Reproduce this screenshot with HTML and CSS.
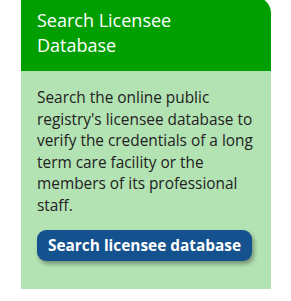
FILE: index.html
```html
<!DOCTYPE html>
<html lang="en">
<head>
  <meta charset="UTF-8" />
  <meta name="viewport" content="width=device-width, initial-scale=1.0"/>
  <title>Search Licensee Database</title>
  <link rel="stylesheet" href="styles.css">
</head>
<body>
  <div class="info-card">
    <div class="card-header">
      <h2>Search Licensee Database</h2>
    </div>
    <div class="card-body">
      <p>Search the online public registry's licensee database to verify the credentials of a long term care facility or the members of its professional staff.</p>
      <a class="btn-search" href="#">Search licensee database</a>
    </div>
  </div>
</body>
</html>
```

FILE: styles.css
```css
:root {
  --header-green: #009f00;
  --body-green: #b3e2b3;
  --btn-blue: #13518f;
  --text-dark: #222;
}

* {
  margin: 0;
  padding: 0;
  box-sizing: border-box;
}

body {
  background: #fff;
  font-family: 'Open Sans', sans-serif;
  padding: 0 20px 0 21px;
}

.info-card {
  width: 250px;
  margin-top: -3px;
  border-top-right-radius: 16px;
  overflow: hidden;
}

.card-header {
  background: var(--header-green);
  padding: 11px 16px 13px;
}

.card-header h2 {
  color: #fff;
  font-size: 18px;
  font-weight: 400;
  line-height: 25px;
}

.card-body {
  background: var(--body-green);
  padding: 16px 16px 28px;
  display: flex;
  flex-direction: column;
  align-items: flex-start;
}

.card-body p {
  color: var(--text-dark);
  font-size: 15.4px;
  line-height: 21.5px;
  margin-bottom: 14px;
}

.btn-search {
  display: block;
  background: var(--btn-blue);
  color: #fff;
  font-size: 15.4px;
  font-weight: 700;
  line-height: 21px;
  text-decoration: none;
  padding: 5px 11px 5px;
  border-radius: 9px;
  box-shadow: 2px 3px 4px rgba(0, 0, 0, 0.35);
}
```
